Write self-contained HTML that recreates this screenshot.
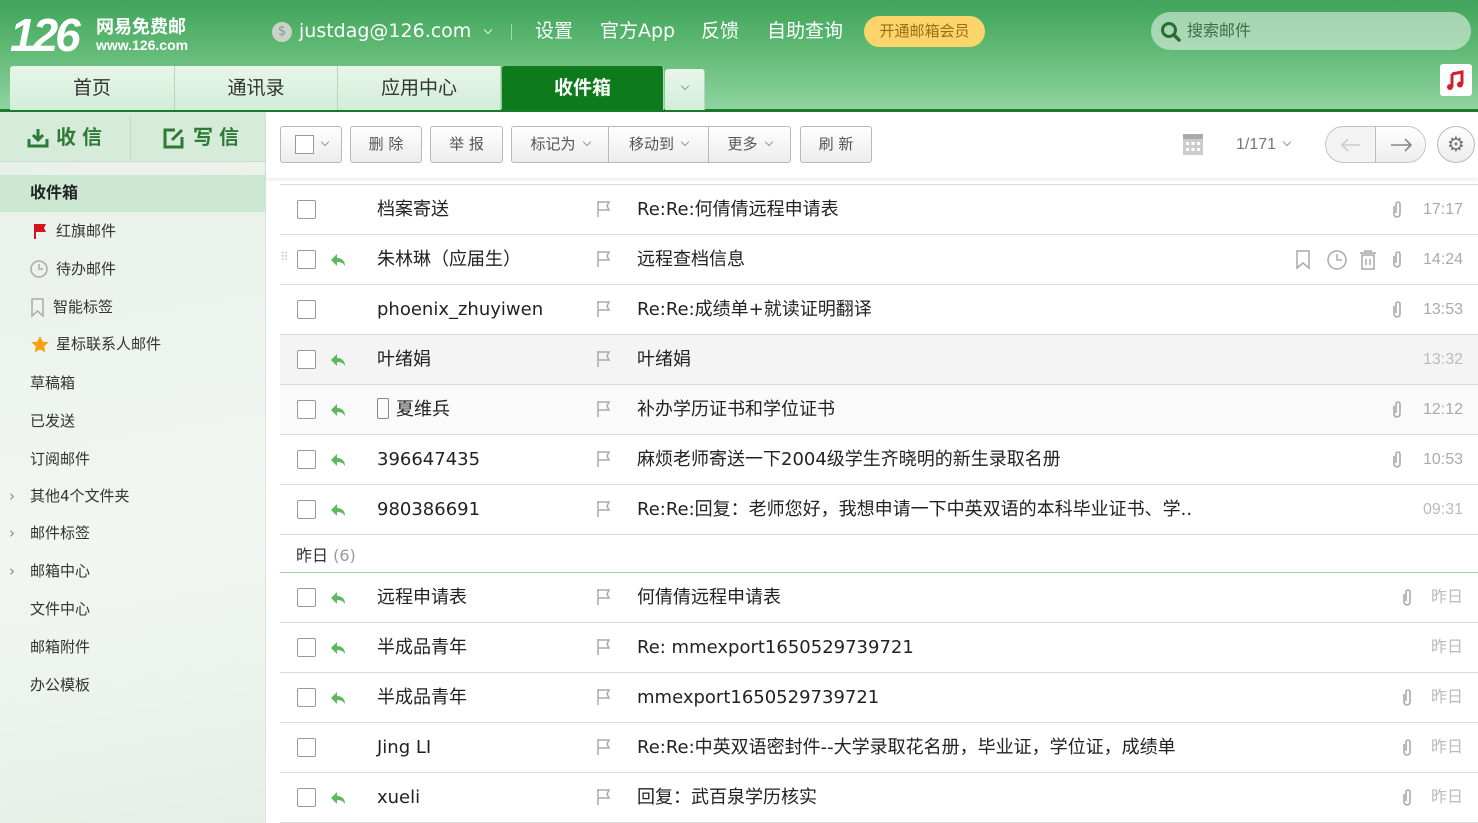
<!DOCTYPE html>
<html><head><meta charset="utf-8">
<style>
*{margin:0;padding:0;box-sizing:border-box}
body{width:1478px;height:823px;overflow:hidden;font-family:"DejaVu Sans","Noto Sans CJK SC",sans-serif;background:#fff;position:relative;color:#222}
.s::before{content:"\4e00";visibility:hidden;display:inline-block;width:0}
.hdr{position:absolute;left:0;top:0;width:1478px;height:112px;background:linear-gradient(180deg,#3fa35a 0%,#5cb771 40%,#8fd3a0 100%);border-bottom:3px solid #1b7a2c}
.abs{position:absolute}
.logo{left:10px;top:8px;color:#fff;font-size:46px;font-weight:bold;font-style:italic;letter-spacing:-3px;font-family:"Liberation Sans",sans-serif}
.nav{color:#fff;font-size:19px;top:18px;line-height:26px}
.tab{top:66px;height:44px;background:linear-gradient(#e8f6ea,#d2eed8);border-right:1px solid #b5d6bb;text-align:center;line-height:44px;font-size:19px;color:#333}
.side{left:0;top:112px;width:266px;height:711px;background:linear-gradient(170deg,#e7f0e8,#f2f6f2 60%,#e6efe7);border-right:1px solid #dde6de}
.sitem{position:absolute;left:30px;font-size:15px;color:#333;line-height:20px}
.sitem svg{position:absolute;left:0;top:1px}
.btn{position:absolute;top:126px;height:37px;border:1px solid #b9b9b9;border-radius:3px;background:linear-gradient(#fff,#ececec);font-size:15px;color:#555;line-height:35px;text-align:center}
.dd{display:inline-block;width:6px;height:6px;border-right:1px solid #999;border-bottom:1px solid #999;transform:rotate(45deg);margin-left:8px;vertical-align:4px}
.row{position:absolute;left:280px;width:1198px;height:50px;border-bottom:1px solid #dadada;font-size:18px}
.row .cb{position:absolute;left:17px;top:15px;width:19px;height:19px;border:1.5px solid #999;border-radius:2px;background:#fff}
.row .rp{position:absolute;left:50px;top:17px}
.row .nm{position:absolute;left:97px;top:12px;color:#222;line-height:26px}
.row .fl{position:absolute;left:316px;top:15px}
.row .sb{position:absolute;left:357px;top:12px;color:#222;line-height:26px}
.row .tm{position:absolute;right:15px;top:12px;color:#aaa;font-size:16px;line-height:26px;font-family:"Liberation Sans","Noto Sans CJK SC",sans-serif}
.row .at{position:absolute;top:15px}
</style></head><body>
<div class="hdr"></div>
<div class="abs logo">126</div>
<div class="abs" style="left:96px;top:13px;color:#fff;font-size:18px;font-weight:bold;font-family:'Liberation Sans','Noto Sans CJK SC',sans-serif">网易免费邮</div>
<div class="abs" style="left:96px;top:37px;color:#fff;font-size:14px;font-weight:bold;font-family:'Liberation Sans',sans-serif">www.126.com</div>
<div class="abs" style="left:272px;top:22px;width:20px;height:20px;border-radius:50%;background:#c9d3cc;color:#8a9a8e;font-size:13px;text-align:center;line-height:20px">$</div>
<div class="abs nav s" style="left:299px">justdag@126.com<span class="dd" style="border-color:#e0f0e3;margin-left:14px"></span></div>
<div class="abs" style="left:511px;top:24px;width:1px;height:16px;background:#a6d6b0"></div>
<div class="abs nav s" style="left:535px">设置</div>
<div class="abs nav s" style="left:600px">官方App</div>
<div class="abs nav s" style="left:701px">反馈</div>
<div class="abs nav s" style="left:767px">自助查询</div>
<div class="abs" style="left:864px;top:16px;width:121px;height:31px;border-radius:16px;background:#fbd56c;color:#a06b13;font-size:15px;line-height:31px;text-align:center">开通邮箱会员</div>
<div class="abs" style="left:1151px;top:12px;width:320px;height:38px;border-radius:19px;background:rgba(225,240,228,.6)"></div>
<svg class="abs" style="left:1160px;top:21px" width="22" height="22" viewBox="0 0 22 22"><circle cx="9" cy="9" r="6.5" fill="none" stroke="#2e6b34" stroke-width="3"/><path d="M14 14l5 5" stroke="#2e6b34" stroke-width="3.5" stroke-linecap="round"/></svg>
<div class="abs" style="left:1187px;top:20px;font-size:16px;color:#3e6e45;line-height:22px">搜索邮件</div>
<div class="abs" style="left:1440px;top:64px;width:32px;height:32px;background:#fff;border-radius:3px"><svg width="32" height="32"><path d="M12 10l10-2v12" fill="none" stroke="#d2202a" stroke-width="3"/><path d="M12 10v13" stroke="#d2202a" stroke-width="3"/><circle cx="10" cy="23" r="3" fill="#d2202a"/><circle cx="20" cy="20.5" r="3" fill="#d2202a"/></svg></div>

<div class="abs tab" style="left:10px;width:165px;border-radius:3px 0 0 0">首页</div>
<div class="abs tab" style="left:175px;width:163px">通讯录</div>
<div class="abs tab" style="left:338px;width:163px">应用中心</div>
<div class="abs tab" style="left:502px;width:162px;background:#0d7a1b;color:#fff;font-weight:bold;border-radius:3px 3px 0 0">收件箱</div>
<div class="abs tab" style="left:665px;width:40px;top:69px;height:41px;line-height:41px;border-radius:3px 3px 0 0"><span class="dd" style="margin:0;vertical-align:6px"></span></div>

<div class="abs side"></div>
<div class="abs" style="left:0;top:112px;width:266px;height:50px;background:#d6ebd9;border-bottom:1px solid #c8dcc9"></div>
<div class="abs" style="left:130px;top:116px;width:1px;height:44px;background:#c5dcc8"></div>
<svg class="abs" style="left:27px;top:128px" width="22" height="20"><path d="M11 1v10M6 7l5 5 5-5" fill="none" stroke="#2e7a37" stroke-width="3"/><path d="M2 11v7h18v-7" fill="none" stroke="#2e7a37" stroke-width="3"/></svg>
<div class="abs" style="left:56px;top:124px;font-size:20px;font-weight:bold;color:#2e7a37;letter-spacing:6px;line-height:26px">收信</div>
<svg class="abs" style="left:163px;top:127px" width="22" height="22"><path d="M12 3H2v17h17V10" fill="none" stroke="#2e7a37" stroke-width="3"/><path d="M9 13l10-10" stroke="#2e7a37" stroke-width="3"/></svg>
<div class="abs" style="left:193px;top:124px;font-size:20px;font-weight:bold;color:#2e7a37;letter-spacing:6px;line-height:26px">写信</div>
<div class="abs" style="left:0;top:175px;width:266px;height:37px;background:#cde8d2"></div>
<div class="sitem" style="top:183px;font-weight:bold;font-size:16px;color:#222">收件箱</div>
<div class="sitem" style="top:221px;padding-left:26px"><svg width="18" height="18"><path d="M5 2v15" stroke="#c9151c" stroke-width="2"/><path d="M5 2h11l-2 4 2 4H5z" fill="#d5141c"/></svg>红旗邮件</div>
<div class="sitem" style="top:259px;padding-left:26px"><svg width="20" height="20"><circle cx="9" cy="9" r="8" fill="none" stroke="#aaa" stroke-width="1.5"/><path d="M9 4v5h4" fill="none" stroke="#aaa" stroke-width="1.5"/></svg>待办邮件</div>
<div class="sitem" style="top:297px;padding-left:23px"><svg width="16" height="20"><path d="M2 1h11v17l-5.5-5L2 18z" fill="none" stroke="#aaa" stroke-width="1.5"/></svg>智能标签</div>
<div class="sitem" style="top:334px;padding-left:26px"><svg width="20" height="20"><path d="M10 1l2.6 5.6 6 .7-4.5 4.1 1.2 6L10 14.4 4.7 17.4l1.2-6L1.4 7.3l6-.7z" fill="#f6a20c"/></svg>星标联系人邮件</div>
<div class="sitem" style="top:373px">草稿箱</div>
<div class="sitem" style="top:411px">已发送</div>
<div class="sitem" style="top:449px">订阅邮件</div>
<div class="sitem" style="top:486px"><span style="position:absolute;left:-21px;color:#888">›</span>其他4个文件夹</div>
<div class="sitem" style="top:523px"><span style="position:absolute;left:-21px;color:#888">›</span>邮件标签</div>
<div class="sitem" style="top:561px"><span style="position:absolute;left:-21px;color:#888">›</span>邮箱中心</div>
<div class="sitem" style="top:599px">文件中心</div>
<div class="sitem" style="top:637px">邮箱附件</div>
<div class="sitem" style="top:675px">办公模板</div>

<div class="abs" style="left:266px;top:112px;width:1212px;height:66px;background:#fff;box-shadow:0 2px 3px rgba(0,0,0,.08)"></div>
<div class="btn" style="left:280px;width:62px"><span style="display:inline-block;width:19px;height:19px;border:1.5px solid #999;vertical-align:middle;background:#fff"></span><span class="dd"></span></div>
<div class="btn" style="left:350px;width:72px">删 除</div>
<div class="btn" style="left:430px;width:73px">举 报</div>
<div class="btn" style="left:511px;width:98px;border-radius:3px 0 0 3px">标记为<span class="dd"></span></div>
<div class="btn" style="left:608px;width:101px;border-radius:0">移动到<span class="dd"></span></div>
<div class="btn" style="left:708px;width:83px;border-radius:0 3px 3px 0">更多<span class="dd"></span></div>
<div class="btn" style="left:800px;width:72px">刷 新</div>
<svg class="abs" style="left:1183px;top:134px" width="20" height="21"><rect x="0" y="3" width="20" height="18" fill="#ccc"/><rect x="0" y="0" width="20" height="5" fill="#aaa"/><g fill="#fff"><rect x="3" y="8" width="3" height="3"/><rect x="8.5" y="8" width="3" height="3"/><rect x="14" y="8" width="3" height="3"/><rect x="3" y="14" width="3" height="3"/><rect x="8.5" y="14" width="3" height="3"/><rect x="14" y="14" width="3" height="3"/></g></svg>
<div class="abs" style="left:1236px;top:134px;font-size:16px;color:#777;font-family:'Liberation Sans',sans-serif;line-height:22px">1/171<span class="dd"></span></div>
<div class="abs" style="left:1325px;top:126px;width:101px;height:37px;border:1px solid #c4c4c4;border-radius:19px;background:#f3f3f3;overflow:hidden"><div style="position:absolute;left:49px;top:0;width:52px;height:37px;border-left:1px solid #bbb;background:linear-gradient(#fff,#ececec)"><svg width="52" height="35"><path d="M15 18h20M29 12l6 6-6 6" fill="none" stroke="#888" stroke-width="1.6"/></svg></div><svg style="position:absolute;left:10px;top:0" width="30" height="35"><path d="M6 18h18M12 12l-6 6 6 6" fill="none" stroke="#ccc" stroke-width="1.6"/></svg></div>
<div class="abs" style="left:1437px;top:126px;width:38px;height:37px;border:1px solid #bbb;border-radius:50%;background:linear-gradient(#fff,#ececec);text-align:center;line-height:35px;color:#777;font-size:20px">&#9881;</div>

<div class="abs" style="left:280px;top:184px;width:1198px;height:1px;background:#dadada"></div>

<div class="row" style="top:185px"><div class="cb"></div><div class="nm s">档案寄送</div><span class="fl"><svg width="16" height="18"><path d="M2 1v16M2 2h11l-2 4 2 4H2" fill="none" stroke="#aaa" stroke-width="1.5"/></svg></span><div class="sb s">Re:Re:何倩倩远程申请表</div><svg class="at" style="left:1110px" width="14" height="20"><path d="M4 6v8a3 3 0 006 0V4a2 2 0 00-4 0v9" fill="none" stroke="#aaa" stroke-width="1.6"/></svg><div class="tm">17:17</div></div>
<div class="row" style="top:235px"><span class="abs" style="left:0;top:15px;color:#ccc;font-size:12px">⠿</span><div class="cb"></div><span class="rp"><svg width="16" height="16"><path d="M7 2L1 8l6 6V10c4 0 6 1 8 4 0-5-3-8-8-8z" fill="#5cb85c"/></svg></span><div class="nm s">朱林琳（应届生）</div><span class="fl"><svg width="16" height="18"><path d="M2 1v16M2 2h11l-2 4 2 4H2" fill="none" stroke="#aaa" stroke-width="1.5"/></svg></span><div class="sb s">远程查档信息</div>
<svg class="abs" style="left:1015px;top:15px" width="16" height="20"><path d="M2 1h12v17l-6-5-6 5z" fill="none" stroke="#aaa" stroke-width="1.5"/></svg>
<svg class="abs" style="left:1046px;top:14px" width="22" height="22"><circle cx="11" cy="11" r="9" fill="none" stroke="#aaa" stroke-width="1.5"/><path d="M11 5v6h5" fill="none" stroke="#aaa" stroke-width="1.5"/></svg>
<svg class="abs" style="left:1079px;top:15px" width="18" height="20"><path d="M1 3h16M6 3V1h6v2M3 5h12v14H3z" fill="none" stroke="#aaa" stroke-width="1.5"/><path d="M7 9v6M11 9v6" stroke="#aaa" stroke-width="1.5"/></svg>
<svg class="at" style="left:1110px" width="14" height="20"><path d="M4 6v8a3 3 0 006 0V4a2 2 0 00-4 0v9" fill="none" stroke="#aaa" stroke-width="1.6"/></svg><div class="tm">14:24</div></div>
<div class="row" style="top:285px"><div class="cb"></div><div class="nm s">phoenix_zhuyiwen</div><span class="fl"><svg width="16" height="18"><path d="M2 1v16M2 2h11l-2 4 2 4H2" fill="none" stroke="#aaa" stroke-width="1.5"/></svg></span><div class="sb s">Re:Re:成绩单+就读证明翻译</div><svg class="at" style="left:1110px" width="14" height="20"><path d="M4 6v8a3 3 0 006 0V4a2 2 0 00-4 0v9" fill="none" stroke="#aaa" stroke-width="1.6"/></svg><div class="tm">13:53</div></div>
<div class="row" style="top:335px;background:#f4f4f4"><div class="cb"></div><span class="rp"><svg width="16" height="16"><path d="M7 2L1 8l6 6V10c4 0 6 1 8 4 0-5-3-8-8-8z" fill="#5cb85c"/></svg></span><div class="nm s">叶绪娟</div><span class="fl"><svg width="16" height="18"><path d="M2 1v16M2 2h11l-2 4 2 4H2" fill="none" stroke="#aaa" stroke-width="1.5"/></svg></span><div class="sb s">叶绪娟</div><div class="tm" style="color:#bbb">13:32</div></div>
<div class="row" style="top:385px;background:#fafafa"><div class="cb"></div><span class="rp"><svg width="16" height="16"><path d="M7 2L1 8l6 6V10c4 0 6 1 8 4 0-5-3-8-8-8z" fill="#5cb85c"/></svg></span><span class="abs" style="left:97px;top:13px;width:12px;height:21px;border:1.5px solid #888;border-radius:2px"></span><div class="nm s" style="left:116px">夏维兵</div><span class="fl"><svg width="16" height="18"><path d="M2 1v16M2 2h11l-2 4 2 4H2" fill="none" stroke="#aaa" stroke-width="1.5"/></svg></span><div class="sb s">补办学历证书和学位证书</div><svg class="at" style="left:1110px" width="14" height="20"><path d="M4 6v8a3 3 0 006 0V4a2 2 0 00-4 0v9" fill="none" stroke="#aaa" stroke-width="1.6"/></svg><div class="tm">12:12</div></div>
<div class="row" style="top:435px"><div class="cb"></div><span class="rp"><svg width="16" height="16"><path d="M7 2L1 8l6 6V10c4 0 6 1 8 4 0-5-3-8-8-8z" fill="#5cb85c"/></svg></span><div class="nm s">396647435</div><span class="fl"><svg width="16" height="18"><path d="M2 1v16M2 2h11l-2 4 2 4H2" fill="none" stroke="#aaa" stroke-width="1.5"/></svg></span><div class="sb s">麻烦老师寄送一下2004级学生齐晓明的新生录取名册</div><svg class="at" style="left:1110px" width="14" height="20"><path d="M4 6v8a3 3 0 006 0V4a2 2 0 00-4 0v9" fill="none" stroke="#aaa" stroke-width="1.6"/></svg><div class="tm">10:53</div></div>
<div class="row" style="top:485px"><div class="cb"></div><span class="rp"><svg width="16" height="16"><path d="M7 2L1 8l6 6V10c4 0 6 1 8 4 0-5-3-8-8-8z" fill="#5cb85c"/></svg></span><div class="nm s">980386691</div><span class="fl"><svg width="16" height="18"><path d="M2 1v16M2 2h11l-2 4 2 4H2" fill="none" stroke="#aaa" stroke-width="1.5"/></svg></span><div class="sb s">Re:Re:回复：老师您好，我想申请一下中英双语的本科毕业证书、学..</div><div class="tm" style="color:#bbb">09:31</div></div>
<div class="abs s" style="left:296px;top:545px;font-size:16px;color:#333;line-height:22px">昨日 <span style="color:#999">(6)</span></div>
<div class="abs" style="left:280px;top:572px;width:1198px;height:1px;background:#9fd0a6"></div>
<div class="row" style="top:573px"><div class="cb"></div><span class="rp"><svg width="16" height="16"><path d="M7 2L1 8l6 6V10c4 0 6 1 8 4 0-5-3-8-8-8z" fill="#5cb85c"/></svg></span><div class="nm s">远程申请表</div><span class="fl"><svg width="16" height="18"><path d="M2 1v16M2 2h11l-2 4 2 4H2" fill="none" stroke="#aaa" stroke-width="1.5"/></svg></span><div class="sb s">何倩倩远程申请表</div><svg class="at" style="left:1120px" width="14" height="20"><path d="M4 6v8a3 3 0 006 0V4a2 2 0 00-4 0v9" fill="none" stroke="#aaa" stroke-width="1.6"/></svg><div class="tm" style="color:#bbb">昨日</div></div>
<div class="row" style="top:623px"><div class="cb"></div><span class="rp"><svg width="16" height="16"><path d="M7 2L1 8l6 6V10c4 0 6 1 8 4 0-5-3-8-8-8z" fill="#5cb85c"/></svg></span><div class="nm s">半成品青年</div><span class="fl"><svg width="16" height="18"><path d="M2 1v16M2 2h11l-2 4 2 4H2" fill="none" stroke="#aaa" stroke-width="1.5"/></svg></span><div class="sb s">Re: mmexport1650529739721</div><div class="tm" style="color:#bbb">昨日</div></div>
<div class="row" style="top:673px"><div class="cb"></div><span class="rp"><svg width="16" height="16"><path d="M7 2L1 8l6 6V10c4 0 6 1 8 4 0-5-3-8-8-8z" fill="#5cb85c"/></svg></span><div class="nm s">半成品青年</div><span class="fl"><svg width="16" height="18"><path d="M2 1v16M2 2h11l-2 4 2 4H2" fill="none" stroke="#aaa" stroke-width="1.5"/></svg></span><div class="sb s">mmexport1650529739721</div><svg class="at" style="left:1120px" width="14" height="20"><path d="M4 6v8a3 3 0 006 0V4a2 2 0 00-4 0v9" fill="none" stroke="#aaa" stroke-width="1.6"/></svg><div class="tm" style="color:#bbb">昨日</div></div>
<div class="row" style="top:723px"><div class="cb"></div><div class="nm s">Jing LI</div><span class="fl"><svg width="16" height="18"><path d="M2 1v16M2 2h11l-2 4 2 4H2" fill="none" stroke="#aaa" stroke-width="1.5"/></svg></span><div class="sb s">Re:Re:中英双语密封件--大学录取花名册，毕业证，学位证，成绩单</div><svg class="at" style="left:1120px" width="14" height="20"><path d="M4 6v8a3 3 0 006 0V4a2 2 0 00-4 0v9" fill="none" stroke="#aaa" stroke-width="1.6"/></svg><div class="tm" style="color:#bbb">昨日</div></div>
<div class="row" style="top:773px"><div class="cb"></div><span class="rp"><svg width="16" height="16"><path d="M7 2L1 8l6 6V10c4 0 6 1 8 4 0-5-3-8-8-8z" fill="#5cb85c"/></svg></span><div class="nm s">xueli</div><span class="fl"><svg width="16" height="18"><path d="M2 1v16M2 2h11l-2 4 2 4H2" fill="none" stroke="#aaa" stroke-width="1.5"/></svg></span><div class="sb s">回复：武百泉学历核实</div><svg class="at" style="left:1120px" width="14" height="20"><path d="M4 6v8a3 3 0 006 0V4a2 2 0 00-4 0v9" fill="none" stroke="#aaa" stroke-width="1.6"/></svg><div class="tm" style="color:#bbb">昨日</div></div>
</body></html>
